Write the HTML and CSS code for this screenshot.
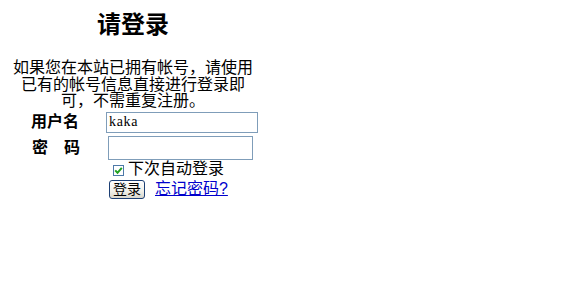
FILE: index.html
```html
<!DOCTYPE html>
<html lang="zh-CN">
<head>
<meta charset="utf-8">
<title>请登录</title>
<link rel="stylesheet" href="styles.css">
</head>
<body>
<div class="box">
  <h1 class="title">请登录</h1>
  <p class="intro">如果您在本站已拥有帐号，请使用已有的帐号信息直接进行登录即可，不需重复注册。</p>
  <form class="form">
    <div class="row">
      <span class="label">用户名</span>
      <input class="input user" type="text" value="kaka">
    </div>
    <div class="row row-pw">
      <span class="label">密　码</span>
      <input class="input pw" type="password">
    </div>
    <div class="row remember">
      <span class="check"><svg width="9" height="9" viewBox="0 0 9 9"><path d="M1.2 4.4 L3.5 6.8 L7.8 1.8" fill="none" stroke="#21a121" stroke-width="2"/></svg></span>
      <span class="remember-text">下次自动登录</span>
    </div>
    <div class="row actions">
      <button class="btn" type="button">登录</button>
      <a class="link" href="#">忘记密码?</a>
    </div>
  </form>
</div>
</body>
</html>
```
FILE: styles.css
```css
html, body {
  background: #ffffff;
}
body {
  margin: 0;
  padding: 8px;
  font-family: "Liberation Sans", "Noto Sans CJK SC", sans-serif;
  color: #000000;
}
.box {
  width: 250px;
}
.title {
  margin: 5px 0 0;
  font-size: 24px;
  line-height: 24px;
  font-weight: bold;
  text-align: center;
}
.intro {
  margin: 23px 0 0;
  font-size: 16px;
  line-height: 16.5px;
  text-align: center;
}
.form {
  display: flex;
  flex-direction: column;
  margin: 2px 0 0;
}
.row {
  display: flex;
  align-items: center;
}
.label {
  width: 96px;
  text-align: center;
  font-size: 16px;
  line-height: 16px;
  font-weight: bold;
}
.input {
  box-sizing: border-box;
  margin: 0 0 0 4px;
  border: 1px solid #7f9db9;
  padding: 0 2px;
  font-family: "Liberation Serif", serif;
  font-size: 14px;
  letter-spacing: 0.7px;
  color: #000;
  background: #fff;
  outline: none;
}
.user {
  width: 152px;
  height: 21px;
}
.row-pw {
  margin-top: 3px;
}
.pw {
  width: 145px;
  height: 24px;
}
.remember {
  height: 18px;
  padding-left: 105px;
  gap: 4px;
}
.check {
  box-sizing: border-box;
  width: 11px;
  height: 11px;
  border: 1px solid #4d79a8;
  background: #fff;
  display: flex;
  align-items: center;
  justify-content: center;
  margin-top: 3px;
}
.check svg {
  display: block;
}
.remember-text {
  font-size: 16px;
  line-height: 16px;
}
.actions {
  margin-top: 2px;
  padding-left: 101px;
  gap: 10px;
}
.btn {
  box-sizing: border-box;
  width: 36px;
  height: 19px;
  padding: 0;
  border: 1px solid #1c3f74;
  border-radius: 3px;
  background: linear-gradient(#ffffff, #f0efe8 60%, #d8d6cc);
  font-family: "Liberation Sans", "Noto Sans CJK SC", sans-serif;
  font-size: 14px;
  line-height: 15px;
  color: #000;
}
.link {
  font-size: 16px;
  line-height: 16px;
  color: #0000cc;
  text-decoration: underline;
}
```
